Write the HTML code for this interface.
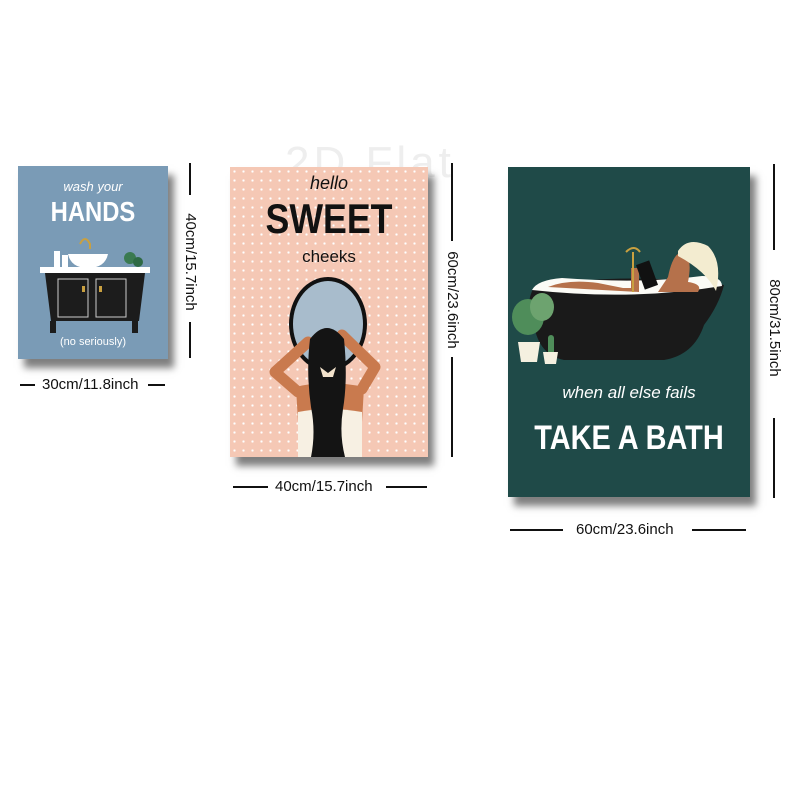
<!DOCTYPE html>
<html><head><meta charset="utf-8"><style>
*{margin:0;padding:0;box-sizing:border-box}
body{width:800px;height:800px;background:#fff;position:relative;overflow:hidden;font-family:"Liberation Sans",sans-serif}
.a{position:absolute}
.p{position:absolute;box-shadow:6px 9px 7px rgba(0,0,0,.5)}
.ln{position:absolute;background:#111}
.lbl{position:absolute;font-size:15px;color:#111;white-space:nowrap;line-height:16px}
.v{transform:rotate(90deg);transform-origin:center}
.t{position:absolute;width:100%;text-align:center;color:#fff;font-weight:bold}
</style></head><body>
<div class="a" style="left:285px;top:138px;font-size:44px;color:#eee;letter-spacing:4px">2D Flat</div>

<!-- Blue -->
<div class="p" style="left:18px;top:166px;width:150px;height:193px;background:#7a9bb6;overflow:hidden">
<div class="t" style="top:13px;font-size:13px;font-weight:normal;font-style:italic">wash your</div>
<div class="t" style="top:30px;font-size:28px;transform:scaleX(.85)">HANDS</div>
<svg class="a" style="left:0;top:0" width="150" height="193">
<path d="M62 78 q5-10 10 0 v5" stroke="#c9a040" stroke-width="2" fill="none"/>
<path d="M50 88 h40 q-3 14-20 14 q-17 0-20-14z" fill="#fff"/>
<rect x="36" y="85" width="6" height="16" fill="#fff"/><rect x="44" y="89" width="6" height="12" fill="#fff"/>
<circle cx="112" cy="92" r="6" fill="#3a7a50"/><circle cx="120" cy="96" r="5" fill="#2e6a45"/>
<rect x="22" y="101" width="110" height="6" fill="#fff"/>
<path d="M27 107 h100 l-6 48 h-88z" fill="#1c1c1c"/>
<rect x="32" y="155" width="6" height="12" fill="#1c1c1c"/><rect x="114" y="155" width="6" height="12" fill="#1c1c1c"/>
<rect x="40" y="113" width="30" height="38" fill="none" stroke="#ccc" stroke-width="1"/>
<rect x="78" y="113" width="30" height="38" fill="none" stroke="#ccc" stroke-width="1"/>
<rect x="64" y="120" width="3" height="6" fill="#c9a040"/><rect x="81" y="120" width="3" height="6" fill="#c9a040"/>
</svg>
<div class="t" style="top:170px;font-size:11px;font-weight:normal">(no seriously)</div>
</div>

<!-- Pink -->
<div class="p" style="left:230px;top:167px;width:198px;height:290px;background:#f5c8b5;background-image:radial-gradient(#fff 1px,transparent 1.3px);background-size:9px 9px;overflow:hidden">
<div class="t" style="top:6px;font-size:18px;color:#111;font-weight:normal;font-style:italic">hello</div>
<div class="t" style="top:28px;font-size:42px;color:#111;transform:scaleX(.85)">SWEET</div>
<div class="t" style="top:80px;font-size:17px;color:#111;font-weight:normal">cheeks</div>
<svg class="a" style="left:0;top:0" width="198" height="290">
<ellipse cx="98" cy="157" rx="39" ry="47" fill="#111"/>
<ellipse cx="98" cy="157" rx="35" ry="43" fill="#a8bccc"/>
<path d="M78 175 L45 205 L68 225" stroke="#c97a4e" stroke-width="11" fill="none" stroke-linejoin="round" stroke-linecap="round"/>
<path d="M112 168 L145 200 L132 222" stroke="#c97a4e" stroke-width="11" fill="none" stroke-linejoin="round" stroke-linecap="round"/>
<path d="M66 220 q30-8 68 0 l-2 35 h-64z" fill="#c97a4e"/>
<path d="M68 245 q30-6 64 0 v45 h-64z" fill="#f7f0e3"/>
<path d="M80 172 q17-22 34 0 q4 40 -1 70 q-4 25 2 48 h-34 q5-25 0-50 q-5-35-1-68z" fill="#141414"/>
<path d="M90 200 l8 6 l8-6 l-3 10 h-10z" fill="#f3e3cc"/>
</svg>
</div>

<!-- Green -->
<div class="p" style="left:508px;top:167px;width:242px;height:330px;background:#1f4a48;overflow:hidden">
<svg class="a" style="left:0;top:0" width="242" height="330">
<path d="M26 120 q90-16 190-2 q-5 20-20 40 q-10 30-40 35 h-100 q-25-5-30-35 q-10-20-0-38z" fill="#1a1a1a"/>
<path d="M24 123 q5-10 30-12 q80 6 140-2 q20 0 20 10 q-90 15-190 4z" fill="#fbfbf6"/>
<path d="M40 120 q20-8 50-4 l25 5 l8 0 v-20 l8 0 l0 24 z" fill="#b5714b"/>
<rect x="132" y="95" width="14" height="26" fill="#111" transform="rotate(-20 139 108)"/>
<path d="M160 110 q5-25 15-25 q10 5 5 30 q15 2 10 10 h-40z" fill="#b5714b"/>
<path d="M170 84 q10-15 30-5 q15 15 8 45 q-10-20-38-35z" fill="#f3ecd0"/>
<path d="M118 85 q8-8 14 0 M125 85 v40" stroke="#c9a040" stroke-width="2" fill="none"/>
<ellipse cx="20" cy="150" rx="16" ry="18" fill="#4f8d5a"/>
<ellipse cx="34" cy="140" rx="12" ry="14" fill="#6da36f"/>
<path d="M10 175 h22 l-3 20 h-16z" fill="#f5f0e0"/>
<rect x="40" y="168" width="6" height="20" rx="3" fill="#4f8d5a"/>
<path d="M35 185 h15 l-2 12 h-11z" fill="#f5f0e0"/>
</svg>
<div class="t" style="top:216px;font-size:17px;font-weight:normal;font-style:italic">when all else fails</div>
<div class="t" style="top:252px;font-size:34px;transform:scaleX(.85)">TAKE A BATH</div>
</div>

<!-- dimensions -->
<div class="ln" style="left:189px;top:163px;width:2px;height:32px"></div>
<div class="ln" style="left:189px;top:322px;width:2px;height:36px"></div>
<div class="lbl v" style="left:130px;top:254px;width:120px;text-align:center">40cm/15.7inch</div>
<div class="ln" style="left:20px;top:384px;width:15px;height:2px"></div>
<div class="lbl" style="left:42px;top:377px">30cm/11.8inch</div>
<div class="ln" style="left:148px;top:384px;width:17px;height:2px"></div>

<div class="ln" style="left:451px;top:163px;width:2px;height:78px"></div>
<div class="ln" style="left:451px;top:357px;width:2px;height:100px"></div>
<div class="lbl v" style="left:392px;top:292px;width:120px;text-align:center">60cm/23.6inch</div>
<div class="ln" style="left:233px;top:486px;width:35px;height:2px"></div>
<div class="lbl" style="left:275px;top:479px">40cm/15.7inch</div>
<div class="ln" style="left:386px;top:486px;width:41px;height:2px"></div>

<div class="ln" style="left:773px;top:164px;width:2px;height:86px"></div>
<div class="ln" style="left:773px;top:418px;width:2px;height:80px"></div>
<div class="lbl v" style="left:714px;top:320px;width:120px;text-align:center">80cm/31.5inch</div>
<div class="ln" style="left:510px;top:529px;width:53px;height:2px"></div>
<div class="lbl" style="left:576px;top:522px">60cm/23.6inch</div>
<div class="ln" style="left:692px;top:529px;width:54px;height:2px"></div>
</body></html>
